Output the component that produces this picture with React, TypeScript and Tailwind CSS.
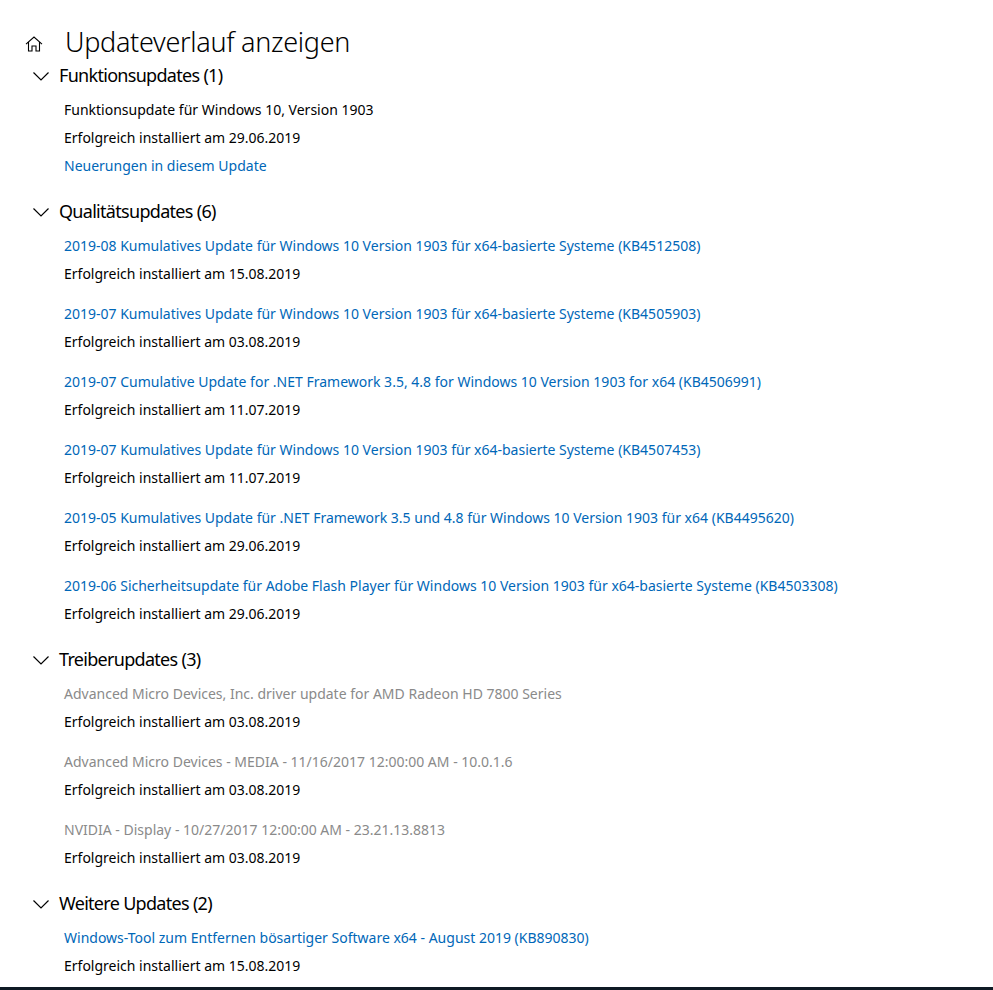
import { ReactNode } from "react"

type Item = { title: string; date: string; kind: "plain" | "link" | "muted" }

const SECTIONS: { name: string; items: Item[]; extra?: string }[] = [
  {
    name: "Funktionsupdates (1)",
    items: [{ title: "Funktionsupdate für Windows 10, Version 1903", date: "29.06.2019", kind: "plain" }],
    extra: "Neuerungen in diesem Update",
  },
  {
    name: "Qualitätsupdates (6)",
    items: [
      { title: "2019-08 Kumulatives Update für Windows 10 Version 1903 für x64-basierte Systeme (KB4512508)", date: "15.08.2019", kind: "link" },
      { title: "2019-07 Kumulatives Update für Windows 10 Version 1903 für x64-basierte Systeme (KB4505903)", date: "03.08.2019", kind: "link" },
      { title: "2019-07 Cumulative Update for .NET Framework 3.5, 4.8 for Windows 10 Version 1903 for x64 (KB4506991)", date: "11.07.2019", kind: "link" },
      { title: "2019-07 Kumulatives Update für Windows 10 Version 1903 für x64-basierte Systeme (KB4507453)", date: "11.07.2019", kind: "link" },
      { title: "2019-05 Kumulatives Update für .NET Framework 3.5 und 4.8 für Windows 10 Version 1903 für x64 (KB4495620)", date: "29.06.2019", kind: "link" },
      { title: "2019-06 Sicherheitsupdate für Adobe Flash Player für Windows 10 Version 1903 für x64-basierte Systeme (KB4503308)", date: "29.06.2019", kind: "link" },
    ],
  },
  {
    name: "Treiberupdates (3)",
    items: [
      { title: "Advanced Micro Devices, Inc. driver update for AMD Radeon HD 7800 Series", date: "03.08.2019", kind: "muted" },
      { title: "Advanced Micro Devices - MEDIA - 11/16/2017 12:00:00 AM - 10.0.1.6", date: "03.08.2019", kind: "muted" },
      { title: "NVIDIA - Display - 10/27/2017 12:00:00 AM - 23.21.13.8813", date: "03.08.2019", kind: "muted" },
    ],
  },
  {
    name: "Weitere Updates (2)",
    items: [
      { title: "Windows-Tool zum Entfernen bösartiger Software x64 - August 2019 (KB890830)", date: "15.08.2019", kind: "link" },
    ],
  },
]

function HomeIcon() {
  return (
    <svg width="18" height="16" viewBox="0 0 18 16" fill="none" stroke="#000" strokeWidth="1.1">
      <path d="M1 8.2 L9 1 L17 8.2" />
      <path d="M3.5 6 V15 H7 V10 H11 V15 H14.5 V6" />
    </svg>
  )
}

function Chevron() {
  return (
    <svg width="16" height="9" viewBox="0 0 16 9" fill="none" stroke="#000" strokeWidth="1.2">
      <path d="M0.5 0.5 L8 8 L15.5 0.5" />
    </svg>
  )
}

function Line({ className, children }: { className: string; children: ReactNode }) {
  return <div className={`h-[28px] leading-[28px] whitespace-nowrap ${className}`}>{children}</div>
}

export default function App() {
  return (
    <div
      className="relative h-[990px] w-[993px] overflow-hidden bg-white text-black"
      style={{ fontFamily: "'Noto Sans', 'Open Sans', sans-serif" }}
    >
      <div className="pt-[22px]">
        {/* header */}
        <div className="flex h-[40px] items-center">
          <div className="ml-[25px] mt-[4px] w-[40px]">
            <HomeIcon />
          </div>
          <h1 className="text-[27px] font-light leading-[40px] tracking-[-0.3px]">Updateverlauf anzeigen</h1>
        </div>

        {SECTIONS.map((s, si) => (
          <section key={s.name} className={si === 0 ? "" : "mt-[18px]"}>
            <div className="flex h-[28px] items-start">
              <div className="ml-[33px] mr-[10px] flex h-[28px] w-[16px] items-center">
                <Chevron />
              </div>
              <span className="text-[18px] leading-[26px] tracking-[-0.7px]">{s.name}</span>
            </div>
            <div className="mt-[6px] pl-[64px] text-[14px]">
              {s.items.map((it, i) => (
                <div key={i} className={i === 0 ? "" : "mt-[12px]"}>
                  <Line
                    className={
                      it.kind === "link" ? "text-[#0067b8]" : it.kind === "muted" ? "text-[#8a8a8a]" : "text-black"
                    }
                  >
                    {it.title}
                  </Line>
                  <Line className="text-black">Erfolgreich installiert am {it.date}</Line>
                </div>
              ))}
              {s.extra && <Line className="text-[#0067b8]">{s.extra}</Line>}
            </div>
          </section>
        ))}
      </div>
      <div className="absolute bottom-0 left-0 right-0 h-[3px] bg-[#0f1a24]" />
    </div>
  )
}
